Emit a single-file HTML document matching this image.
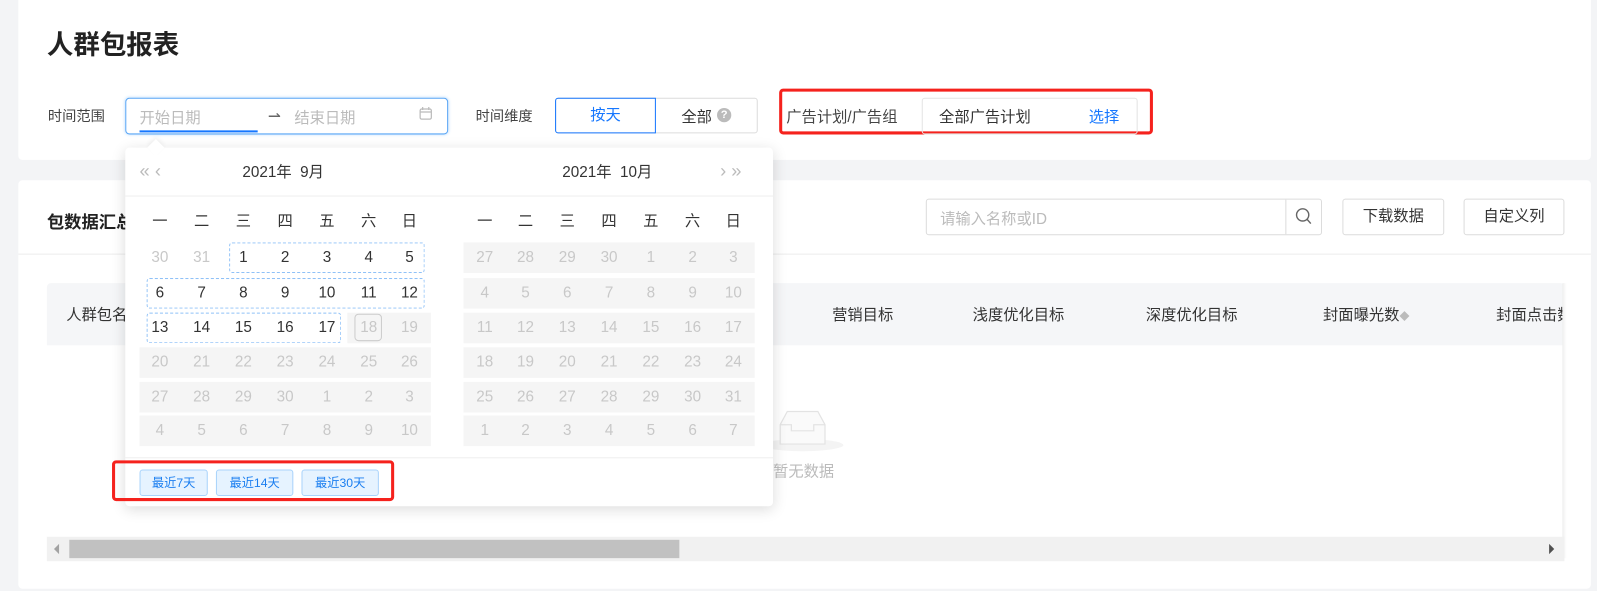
<!DOCTYPE html>
<html><head><meta charset="utf-8"><style>
*{margin:0;padding:0;box-sizing:border-box}
html,body{width:1597px;height:591px;overflow:hidden}
body{background:#f3f4f6;font-family:"Liberation Sans","Noto Sans CJK SC",sans-serif;color:#333;font-size:14px}
#w{position:absolute;left:0;top:0;width:1568px;height:580px;transform:scale(1.0185);transform-origin:0 0}
.a{position:absolute}
.card{background:#fff;border-radius:4px}
.t{white-space:nowrap}
.gray{background:#f5f5f5}
.c{position:absolute;width:40px;text-align:center;font-size:15px;line-height:20px}
.dis{color:#c8c8c8}
.dot{position:absolute;border:1px dashed #8fc1f7;border-radius:3px}
.btn{position:absolute;border:1px solid #dcdcdc;border-radius:3px;background:#fff;text-align:center;font-size:14px;color:#333}
.qb{position:absolute;top:461px;height:26px;border:1px solid #a9d3fb;background:#e6f3ff;color:#1a7ef0;border-radius:3px;font-size:12px;line-height:24px;text-align:center}
.red{position:absolute;border:3px solid #f5221d;border-radius:4px}
</style></head><body><div id="w">
<div class="a card" style="left:18px;top:-4px;width:1544px;height:161px"></div>
<div class="a t" style="left:46px;top:24px;font-size:26px;font-weight:bold;color:#222">人群包报表</div>
<div class="a t" style="left:47px;top:104px;color:#444">时间范围</div>
<div class="a" style="left:123px;top:96px;width:317px;height:36px;border:1px solid #5aa6f5;border-radius:4px;box-shadow:0 0 3px #b7dafc"></div>
<div class="a t" style="left:137px;top:105px;color:#bbb;font-size:15px">开始日期</div>
<div class="a" style="left:137px;top:128px;width:116px;height:2px;background:#1677ff"></div>
<div class="a t" style="left:263px;top:105px;color:#666;font-size:15px">⇀</div>
<div class="a t" style="left:289px;top:105px;color:#bbb;font-size:15px">结束日期</div>
<svg class="a" style="left:411px;top:104px" width="14" height="15" viewBox="0 0 14 15"><rect x="1.5" y="3" width="11" height="10" rx="1.5" fill="none" stroke="#bbb" stroke-width="1.2"/><path d="M4 1v3M10 1v3M1.5 6h11" stroke="#bbb" stroke-width="1.2"/></svg>
<div class="a t" style="left:467px;top:104px;color:#444">时间维度</div>
<div class="a" style="left:545px;top:96px;width:199px;height:35px;border:1px solid #dcdcdc;border-radius:3px"></div>
<div class="a" style="left:545px;top:96px;width:99px;height:35px;border:1px solid #1677ff;border-radius:3px 0 0 3px;color:#1677ff;text-align:center;line-height:33px;font-size:15px">按天</div>
<div class="a t" style="left:669px;top:104px;font-size:15px;color:#333">全部</div>
<div class="a" style="left:704px;top:106px;width:14px;height:14px;border-radius:50%;background:#bbb;color:#fff;font-size:11px;text-align:center;line-height:14px;font-weight:bold">?</div>
<div class="red" style="left:765px;top:87px;width:367px;height:45px"></div>
<div class="a t" style="left:772px;top:104px;color:#444;font-size:15px">广告计划/广告组</div>
<div class="a" style="left:905px;top:96px;width:212px;height:36px;border:1px solid #e3e3e3;border-radius:3px"></div>
<div class="a t" style="left:922px;top:104px;color:#333;font-size:15px">全部广告计划</div>
<div class="a t" style="left:1069px;top:104px;color:#1677ff;font-size:15px">选择</div>

<div class="a card" style="left:18px;top:177px;width:1544px;height:401px"></div>
<div class="a t" style="left:46px;top:204px;font-size:17px;font-weight:bold;color:#222">包数据汇总</div>
<div class="a" style="left:909px;top:195px;width:389px;height:36px;border:1px solid #dcdcdc;border-radius:3px"></div>
<div class="a" style="left:1262px;top:196px;width:1px;height:34px;background:#dcdcdc"></div>
<div class="a t" style="left:923px;top:204px;color:#bbb;font-size:15px">请输入名称或ID</div>
<svg class="a" style="left:1271px;top:203px" width="18" height="19" viewBox="0 0 18 19"><circle cx="8" cy="8" r="6" fill="none" stroke="#666" stroke-width="1.4"/><path d="M12.5 12.5l3.5 4" stroke="#666" stroke-width="1.4"/></svg>
<div class="btn" style="left:1318px;top:195px;width:100px;height:36px;line-height:34px;font-size:15px">下载数据</div>
<div class="btn" style="left:1437px;top:195px;width:99px;height:36px;line-height:34px;font-size:15px">自定义列</div>
<div class="a" style="left:18px;top:249px;width:1544px;height:1px;background:#ececec"></div>
<div class="a" style="left:46px;top:278px;width:1490px;height:61px;background:#f5f6f8;border-radius:4px 4px 0 0"></div>
<div class="a t" style="left:65px;top:298px;font-size:15px">人群包名称</div>
<div class="a t" style="left:817px;top:298px;font-size:15px">营销目标</div>
<div class="a t" style="left:955px;top:298px;font-size:15px">浅度优化目标</div>
<div class="a t" style="left:1125px;top:298px;font-size:15px">深度优化目标</div>
<div class="a t" style="left:1299px;top:298px;font-size:15px">封面曝光数<span style="color:#bbb;font-size:10px">◆</span></div>
<div class="a" style="left:1460px;top:278px;width:76px;height:61px;overflow:hidden"><div class="t" style="margin:20px 0 0 9px;font-size:15px">封面点击数</div></div>
<div class="a" style="left:1534px;top:278px;width:4px;height:270px;background:linear-gradient(90deg,#eee,#fff)"></div>
<svg class="a" style="left:745px;top:398px" width="86" height="46" viewBox="0 0 86 46"><ellipse cx="43" cy="39" rx="40" ry="6" fill="#f4f4f4"/><path d="M21 38V19l7-13h30l7 13v19z" fill="#fafafa" stroke="#e3e3e3" stroke-width="1.2"/><path d="M21 19h11v6h22v-6h11" fill="none" stroke="#e3e3e3" stroke-width="1.2"/></svg>
<div class="a t" style="left:759px;top:452px;color:#bbb;font-size:15px">暂无数据</div>
<div class="a" style="left:46px;top:527px;width:1490px;height:24px;background:#f1f1f1"></div>
<div class="a" style="left:68px;top:530px;width:599px;height:18px;background:#c1c1c1"></div>
<div class="a" style="left:53px;top:534px;width:0;height:0;border:5px solid transparent;border-right-color:#a3a3a3;border-left:0"></div>
<div class="a" style="left:1521px;top:534px;width:0;height:0;border:5px solid transparent;border-left-color:#505050;border-right:0"></div>

<div class="a" style="left:123px;top:145px;width:636px;height:352px;background:#fff;border-radius:4px;box-shadow:0 3px 14px rgba(0,0,0,.14)"></div>
<div class="a" style="left:147px;top:139px;width:12px;height:12px;background:#fff;transform:rotate(45deg);box-shadow:-2px -2px 4px rgba(0,0,0,.05)"></div>
<div class="a t" style="left:137px;top:158px;color:#bbb;font-size:18px">«&nbsp;‹</div>
<div class="a t" style="left:238px;top:158px;font-size:15px">2021年&nbsp; 9月</div>
<div class="a t" style="left:552px;top:158px;font-size:15px">2021年&nbsp; 10月</div>
<div class="a t" style="left:707px;top:158px;color:#bbb;font-size:18px">›&nbsp;»</div>
<div class="a" style="left:123px;top:192px;width:636px;height:1px;background:#eee"></div>
<div class="a" style="left:123px;top:449px;width:636px;height:1px;background:#eee"></div>
<div id="cal"></div>
<div class="qb" style="left:137px;width:67px">最近7天</div>
<div class="qb" style="left:212px;width:76px">最近14天</div>
<div class="qb" style="left:296px;width:76px">最近30天</div>
<div class="red" style="left:110px;top:452px;width:277px;height:40px"></div>
</div>
<script>
var h='';var wk=['一','二','三','四','五','六','日'];
var L=[157,198,239,280,321,362,402],R=[476,516,557,598,639,680,720],Y=[253,288,322,356,390,423];
for(var i=0;i<7;i++){h+='<div class="c" style="left:'+(L[i]-20)+'px;top:208px">'+wk[i]+'</div><div class="c" style="left:'+(R[i]-20)+'px;top:208px">'+wk[i]+'</div>';}
var sep=[[30,31,1,2,3,4,5],[6,7,8,9,10,11,12],[13,14,15,16,17,18,19],[20,21,22,23,24,25,26],[27,28,29,30,1,2,3],[4,5,6,7,8,9,10]];
var oct=[[27,28,29,30,1,2,3],[4,5,6,7,8,9,10],[11,12,13,14,15,16,17],[18,19,20,21,22,23,24],[25,26,27,28,29,30,31],[1,2,3,4,5,6,7]];
for(var r=0;r<6;r++){var y=Y[r];
 h+='<div class="a gray" style="left:455px;top:'+(y-15)+'px;width:286px;height:30px"></div>';
 if(r>=3)h+='<div class="a gray" style="left:137px;top:'+(y-15)+'px;width:286px;height:30px"></div>';
 if(r==2)h+='<div class="a gray" style="left:341px;top:'+(y-15)+'px;width:82px;height:30px"></div>';
}
h+='<div class="dot" style="left:225px;top:238px;width:192px;height:30px"></div>';
h+='<div class="dot" style="left:144px;top:273px;width:273px;height:30px"></div>';
h+='<div class="dot" style="left:144px;top:307px;width:191px;height:30px"></div>';
h+='<div class="a" style="left:348px;top:308px;width:27px;height:27px;border:1px solid #ccc;border-radius:4px"></div>';
for(var r=0;r<6;r++)for(var i=0;i<7;i++){var d=(r==0&&i<2)||(r==2&&i>=5)||r>=3;
 h+='<div class="c'+(d?' dis':'')+'" style="left:'+(L[i]-20)+'px;top:'+(Y[r]-10)+'px">'+sep[r][i]+'</div>';
 h+='<div class="c dis" style="left:'+(R[i]-20)+'px;top:'+(Y[r]-10)+'px">'+oct[r][i]+'</div>';}
document.getElementById('cal').innerHTML=h;
</script>
</body></html>
